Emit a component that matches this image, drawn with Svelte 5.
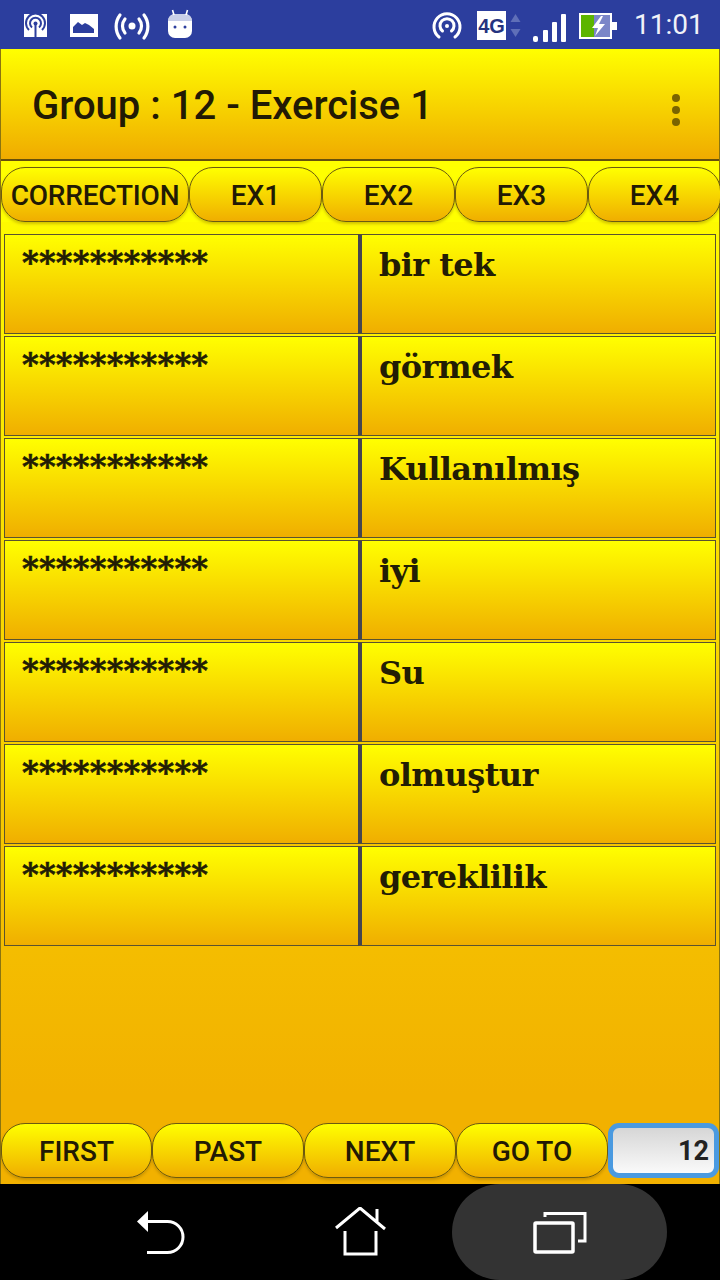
<script>
	const tabs = ["CORRECTION", "EX1", "EX2", "EX3", "EX4"];
	const words = ["bir tek", "görmek", "Kullanılmış", "iyi", "Su", "olmuştur", "gereklilik"];
	const pager = ["FIRST", "PAST", "NEXT", "GO TO"];
</script>

<div class="screen">
	<header class="status">
		<svg class="left-icons" width="170" height="48" viewBox="24 0 170 48">
			<!-- hotspot box -->
			<rect x="24" y="13" width="23" height="23" fill="#fff" />
			<g fill="none" stroke="#2c3e9e" stroke-width="2">
				<path d="M29 29a9.5 9.5 0 1 1 13 0" />
				<path d="M32 26.500a5.500 5.500 0 1 1 7 0" />
			</g>
			<circle cx="35.500" cy="22.500" r="2" fill="#2c3e9e" />
			<rect x="34.500" y="23" width="2" height="13" fill="#2c3e9e" />
			<!-- picture -->
			<rect x="70" y="13" width="28" height="23" fill="#fff" />
			<path d="M73 32v-6l5-5 4 3 3-2 4 2 5 4v4z" fill="#2c3e9e" />
			<!-- radio -->
			<circle cx="132" cy="25" r="3.500" fill="#fff" />
			<g fill="none" stroke="#fff" stroke-width="3.200" stroke-linecap="round">
				<path d="M125 18a11 11 0 0 0 0 14" />
				<path d="M139 18a11 11 0 0 1 0 14" />
				<path d="M120 14a19 19 0 0 0 0 23" />
				<path d="M144 14a19 19 0 0 1 0 23" />
			</g>
			<!-- android -->
			<path d="M168 20a7 7 0 0 1 7-7h10a7 7 0 0 1 7 7v10a7 7 0 0 1-7 7h-10a7 7 0 0 1-7-7z" fill="#fff" />
			<path d="M168 20a7 7 0 0 1 7-7h10a7 7 0 0 1 7 7z" fill="#c9cfe8" />
			<path d="M174 14l-1.500-5M186 14l1.500-5" stroke="#fff" stroke-width="1.600" />
			<circle cx="175" cy="26" r="1.500" fill="#2c3e9e" />
			<circle cx="185" cy="26" r="1.500" fill="#2c3e9e" />
		</svg>
		<svg class="right-icons" width="186" height="48" viewBox="432 0 186 48">
			<!-- hotspot rings -->
			<g fill="none" stroke="#fff" stroke-width="3" stroke-linecap="round">
				<path d="M439 36a13 13 0 1 1 16 0" />
				<path d="M442.500 30a7 7 0 1 1 9 0" />
			</g>
			<circle cx="447" cy="25" r="2" fill="#fff" />
			<!-- 4G -->
			<rect x="477" y="10" width="29" height="29" fill="#fff" />
			<text x="491.500" y="32" class="net">4G</text>
			<path d="M515.500 13l5 8h-10z" fill="#5f6fb8" />
			<path d="M515.500 36l5-8h-10z" fill="#5f6fb8" />
			<!-- signal -->
			<rect x="533" y="35" width="5" height="6" rx="2" fill="#fff" />
			<rect x="543" y="29" width="5" height="12" rx="1" fill="#fff" />
			<rect x="552" y="21" width="5" height="20" rx="1" fill="#fff" />
			<rect x="561" y="13" width="5" height="28" rx="1" fill="#fff" />
			<!-- battery -->
			<rect x="579" y="12" width="33" height="26" fill="#fff" />
			<rect x="581" y="14" width="29" height="22" fill="#7b86c8" />
			<rect x="581" y="14" width="13" height="22" fill="#5cb500" />
			<rect x="612" y="21" width="5" height="8" fill="#fff" />
			<path d="M601 15l-9 12h6l-3 8 10-12h-6l4-8z" fill="#fff" />
		</svg>
		<span class="clock">11:01</span>
	</header>

	<div class="window">
		<div class="appbar">
			<h1>Group : 12 - Exercise 1</h1>
			<div class="more"><i></i><i></i><i></i></div>
		</div>

		<nav class="tabs">
			{#each tabs as tab, i}
				<button class:wide={i == 0}>{tab}</button>
			{/each}
		</nav>

		<div class="rows">
			{#each words as word}
				<div class="row">
					<div class="cell hidden">***********</div>
					<div class="cell">{word}</div>
				</div>
			{/each}
		</div>

		<div class="pager">
			{#each pager as label}
				<button>{label}</button>
			{/each}
			<div class="page-input">12</div>
		</div>
	</div>

	<footer class="navbar">
		<svg class="back" width="50" height="50" viewBox="0 0 50 50">
			<path d="M1 14.500L12 4v21z" fill="#fff" />
			<path d="M11 14.500H31.500a15.500 15.500 0 0 1 0 31H11" fill="none" stroke="#fff" stroke-width="3" />
		</svg>
		<svg class="home" width="54" height="50" viewBox="0 0 54 50">
			<path d="M3 21L27 1l25 21M44 2v13" fill="none" stroke="#fff" stroke-width="3" />
			<path d="M12 24v23h31V24" fill="none" stroke="#fff" stroke-width="3" />
		</svg>
		<div class="recent">
			<svg width="54" height="44" viewBox="0 0 54 44">
				<rect x="2" y="13" width="38" height="29" rx="1" fill="none" stroke="#fff" stroke-width="3.500" />
				<path d="M12 7V3.500H52V31H45" fill="none" stroke="#fff" stroke-width="3" />
			</svg>
		</div>
	</footer>
</div>

<style>
	:global(body) {
		margin: 0;
	}
	.screen {
		display: flex;
		flex-direction: column;
		width: 720px;
		height: 1280px;
		overflow: hidden;
		font-family: Roboto, sans-serif;
		background: #000;
	}
	.status {
		display: flex;
		align-items: center;
		flex: 0 0 49px;
		height: 49px;
		background: #2c3e9e;
		padding-left: 24px;
		box-sizing: border-box;
	}
	.right-icons {
		margin-left: 238px;
	}
	.net {
		font-family: "Liberation Sans", sans-serif;
		font-weight: 700;
		font-size: 20px;
		text-anchor: middle;
		fill: #24337f;
	}
	.clock {
		margin-left: 16px;
		color: #f1f2f8;
		font-size: 28px;
	}
	.window {
		flex: 1;
		display: flex;
		flex-direction: column;
		min-height: 0;
		background: linear-gradient(#ffff00 10%, #f2b100 92%);
		border-left: 1px solid #8a7410;
		border-right: 1px solid #8a7410;
	}
	.appbar {
		flex: 0 0 112px;
		display: flex;
		align-items: center;
		justify-content: space-between;
		box-sizing: border-box;
		padding: 3px 39px 0 31px;
		background: linear-gradient(#ffff00, #f0ab00);
		border-bottom: 2px solid #66500c;
	}
	h1 {
		margin: 0;
		font-size: 40px;
		font-weight: 500;
		color: #221a04;
	}
	.more {
		display: flex;
		flex-direction: column;
		gap: 4px;
		margin-top: 9px;
	}
	.more i {
		width: 8px;
		height: 8px;
		border-radius: 50%;
		background: #7a6400;
	}
	.tabs {
		display: flex;
		padding: 6px 0 0;
		background: #ffff00;
		height: 55px;
		flex: 0 0 auto;
	}
	button {
		flex: 1;
		padding: 2px 0 0;
		border: 1px solid #6b5a10;
		border-radius: 24px;
		background: linear-gradient(#ffff00, #f0ae00);
		box-shadow: 0 2px 3px rgba(120, 90, 0, 0.35);
		color: #221a04;
		font-family: Roboto, sans-serif;
		font-size: 28px;
		font-weight: 500;
		white-space: nowrap;
	}
	.tabs button {
		flex: 0 0 133px;
	}
	.tabs button.wide {
		flex: 0 0 188px;
		letter-spacing: -0.2px;
	}
	.rows {
		display: flex;
		flex-direction: column;
		gap: 2px;
		margin: 12px 3px 0;
	}
	.row {
		display: flex;
		height: 100px;
	}
	.cell {
		flex: 1;
		box-sizing: border-box;
		padding: 8px 17px;
		border: 1px solid #5a5230;
		background: linear-gradient(#ffff00, #f0ae00);
		color: #221d04;
		font-family: "DejaVu Serif", serif;
		font-weight: 700;
		font-size: 32px;
		line-height: 44px;
		letter-spacing: -0.6px;
	}
	.hidden {
		flex: 0 0 354px;
		padding: 5px 17px;
		border-right: 0;
		letter-spacing: 0.2px;
		-webkit-text-stroke: 0.6px #221d04;
	}
	.cell:not(.hidden) {
		border-left: 4px solid #444450;
	}
	.pager {
		display: flex;
		margin-top: auto;
		padding-bottom: 6px;
		height: 55px;
	}
	.pager button {
		flex: 0 0 152px;
	}
	.pager button:first-child {
		flex: 0 0 151px;
	}
	.page-input {
		flex: 1;
		box-sizing: border-box;
		border: 5px solid #4a9ae0;
		border-radius: 11px;
		background: linear-gradient(#d6d6d6, #fafafa);
		padding-right: 5px;
		text-align: right;
		font-size: 27px;
		font-weight: 700;
		line-height: 46px;
		color: #222;
	}
	.navbar {
		flex: 0 0 96px;
		display: flex;
		align-items: center;
		position: relative;
	}
	.back {
		margin-left: 136px;
	}
	.home {
		margin-left: 147px;
	}
	.recent {
		margin-left: 65px;
		width: 215px;
		height: 96px;
		border-radius: 48px;
		background: #333;
		display: flex;
		align-items: center;
		justify-content: center;
	}
</style>
